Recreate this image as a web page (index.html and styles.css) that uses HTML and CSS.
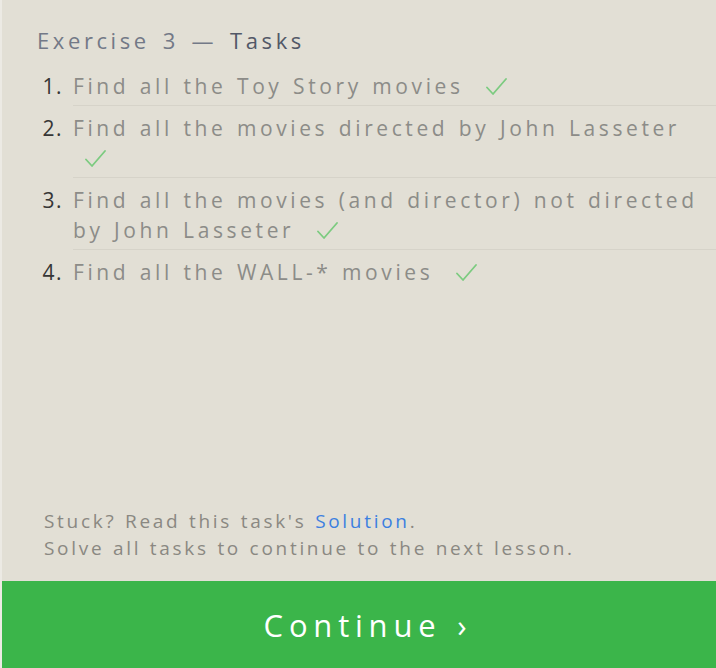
FILE: index.html
```html
<!DOCTYPE html>
<html lang="en">
<head>
<meta charset="utf-8">
<title>Exercise 3 — Tasks</title>
<link rel="stylesheet" href="styles.css">
</head>
<body>
<div class="page">
  <div class="panel">
    <h2 class="title"><span class="title-muted">Exercise 3 —</span> <span class="title-strong">Tasks</span></h2>
    <ol class="tasks">
      <li class="task"><span class="num">1.</span><span class="text">Find all the Toy Story movies <svg class="check" viewBox="0 0 21 17" width="21" height="17" aria-hidden="true"><path d="M1 9.5 L7 16 L20 1" fill="none" stroke="currentColor" stroke-width="1.8" stroke-linecap="round" stroke-linejoin="round"/></svg></span></li>
      <li class="task"><span class="num">2.</span><span class="text">Find all the movies directed by John Lasseter <svg class="check" viewBox="0 0 21 17" width="21" height="17" aria-hidden="true"><path d="M1 9.5 L7 16 L20 1" fill="none" stroke="currentColor" stroke-width="1.8" stroke-linecap="round" stroke-linejoin="round"/></svg></span></li>
      <li class="task"><span class="num">3.</span><span class="text">Find all the movies (and director) not directed by John Lasseter <svg class="check" viewBox="0 0 21 17" width="21" height="17" aria-hidden="true"><path d="M1 9.5 L7 16 L20 1" fill="none" stroke="currentColor" stroke-width="1.8" stroke-linecap="round" stroke-linejoin="round"/></svg></span></li>
      <li class="task"><span class="num">4.</span><span class="text">Find all the WALL-* movies <svg class="check" viewBox="0 0 21 17" width="21" height="17" aria-hidden="true"><path d="M1 9.5 L7 16 L20 1" fill="none" stroke="currentColor" stroke-width="1.8" stroke-linecap="round" stroke-linejoin="round"/></svg></span></li>
    </ol>
    <div class="spacer"></div>
    <p class="hint">Stuck? Read this task's <a class="link" href="#">Solution</a>.<br>Solve all tasks to continue to the next lesson.</p>
  </div>
  <a class="continue" href="#">Continue ›</a>
</div>
</body>
</html>
```

FILE: styles.css
```css
html, body {
  margin: 0;
  padding: 0;
}
body {
  background: #e2dfd5;
  font-family: "Open Sans", "Noto Sans", sans-serif;
  width: 716px;
  height: 668px;
  overflow: hidden;
}
.page {
  height: 668px;
  display: flex;
  flex-direction: column;
  border-left: 2px solid #eceae4;
  box-sizing: border-box;
}
.panel {
  flex: 1;
  display: flex;
  flex-direction: column;
}
.title {
  margin: 26px 0 0 35px;
  font-size: 22px;
  font-weight: 400;
  line-height: 28px;
  letter-spacing: 3.6px;
  word-spacing: 3.5px;
}
.title-muted { color: #737987; }
.title-strong { color: #525867; }
.tasks {
  list-style: none;
  margin: 17px 0 0 0;
  padding: 0;
}
.task {
  display: flex;
}
.task + .task { padding-top: 7px; }
.num {
  width: 71px;
  flex: none;
  text-align: right;
  padding-right: 10px;
  box-sizing: border-box;
  color: #363636;
  font-size: 21px;
  line-height: 30px;
  letter-spacing: 1.5px;
}
.text {
  flex: 1;
  color: #8c8c88;
  font-size: 21px;
  line-height: 30px;
  letter-spacing: 3.6px;
  word-spacing: 1.5px;
  padding-bottom: 4px;
  border-bottom: 1px solid #d6d3c9;
}
.task:last-child .text { border-bottom: none; }
.check {
  display: inline-block;
  vertical-align: -1px;
  margin-left: 12px;
  color: #7ccb80;
}
.spacer { flex: 1; }
.hint {
  margin: 0 0 19px 42px;
  font-size: 19px;
  line-height: 27px;
  color: #8a8882;
  letter-spacing: 2.7px;
  word-spacing: 1px;
}
.link {
  color: #3d7fe0;
  text-decoration: none;
}
.continue {
  display: flex;
  align-items: center;
  justify-content: center;
  height: 87px;
  background: #3bb54a;
  color: #ffffff;
  font-size: 31px;
  letter-spacing: 5.8px;
  word-spacing: 2px;
  text-decoration: none;
  padding-left: 18px;
}
```
